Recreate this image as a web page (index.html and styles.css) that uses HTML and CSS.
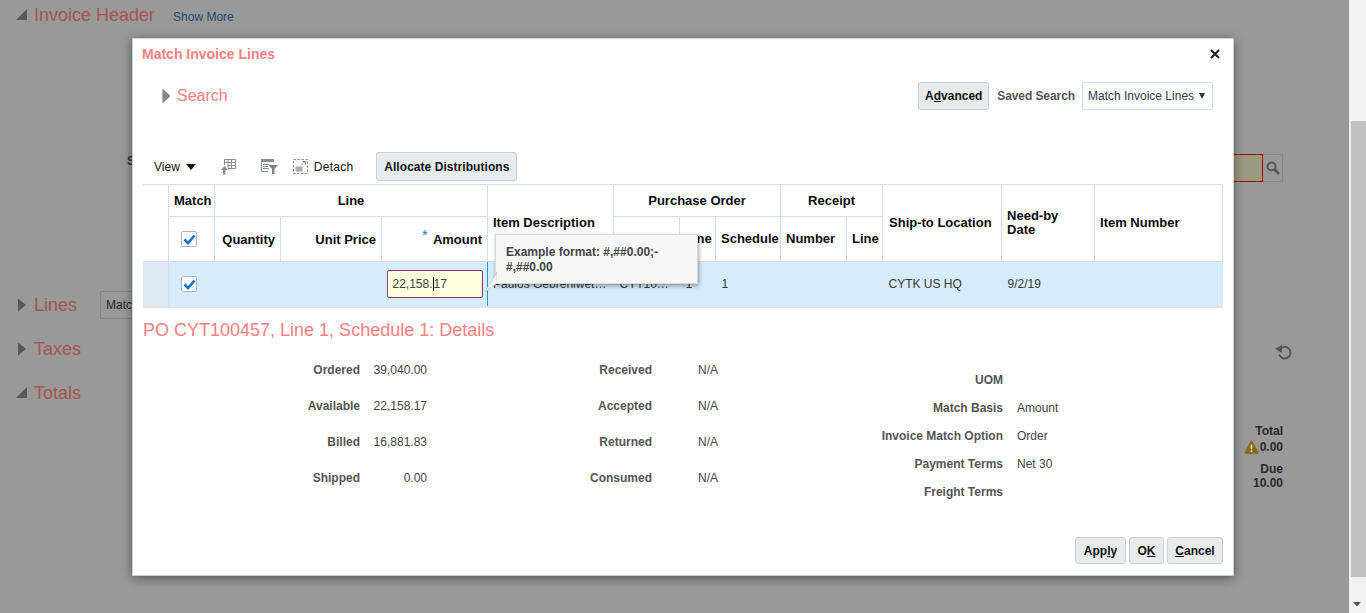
FILE: index.html
```html
<!DOCTYPE html>
<html>
<head>
  <title>Match Invoice Lines</title>
  <link rel="stylesheet" href="styles.css">
</head>
<body>
  <div class="page">

    <div class="page-main">
      <div class="section-row section-first">
        <svg class="tri" width="14" height="14" viewBox="0 0 14 14"><path d="M1 12 L12 1 L12 12 Z"/></svg>
        <span class="section-title">Invoice Header</span>
        <a class="show-more">Show More</a>
      </div>

      <div class="back-search">
        <span class="back-label">Supplier</span>
        <div class="back-field"></div>
        <div class="back-button">
          <svg width="16" height="16" viewBox="0 0 16 16"><circle cx="6.5" cy="6.5" r="4" fill="none" stroke="#555" stroke-width="2"/><path d="M9.5 9.5 L14 14" stroke="#555" stroke-width="2.6"/></svg>
        </div>
      </div>

      <div class="section-row section-lines">
        <svg class="tri" width="14" height="14" viewBox="0 0 14 14"><path d="M3 0.5 L11 7 L3 13.5 Z"/></svg>
        <span class="section-title">Lines</span>
        <div class="back-select">Match Invoice Lines</div>
      </div>

      <div class="section-row section-next">
        <svg class="tri" width="14" height="14" viewBox="0 0 14 14"><path d="M3 0.5 L11 7 L3 13.5 Z"/></svg>
        <span class="section-title">Taxes</span>
        <svg class="undo-icon" width="17" height="15" viewBox="0 0 17 15"><path d="M6 3.2 A5.8 5.8 0 1 1 4.2 9.5" fill="none" stroke="#555" stroke-width="1.9"/><path d="M0 3.8 L7 0 L7 8 Z" fill="#555"/></svg>
      </div>

      <div class="section-row section-next">
        <svg class="tri" width="14" height="14" viewBox="0 0 14 14"><path d="M1 12 L12 1 L12 12 Z"/></svg>
        <span class="section-title">Totals</span>
      </div>

      <div class="back-totals">
        <div class="total-label">Total</div>
        <div class="total-value">
          <svg class="warn-icon" width="15" height="14" viewBox="0 0 15 14"><path d="M7.5 1 L14 13 L1 13 Z" fill="#8a6a0c" stroke="#8a6a0c" stroke-width="1.4" stroke-linejoin="round"/><path d="M6.7 4.5 H8.3 V9.3 H6.7 Z M6.7 10.3 H8.3 V12 H6.7 Z" fill="#ddd"/></svg>
          <span>0.00</span>
        </div>
        <div class="total-label total-due">Due</div>
        <div class="total-label">10.00</div>
      </div>
    </div>

    <div class="scrollbar">
      <div class="scroll-thumb"></div>
      <svg class="scroll-arrow" width="9" height="5" viewBox="0 0 9 5"><path d="M0 0 H8 L4 4.5 Z"/></svg>
    </div>

  </div>

  <div class="dialog">

    <div class="dialog-title-row">
      <span class="dialog-title">Match Invoice Lines</span>
      <svg class="close-icon" width="10" height="10" viewBox="0 0 10 10"><path d="M1 1 L9 9 M9 1 L1 9" stroke="#222" stroke-width="2.2"/></svg>
    </div>

    <div class="search-row">
      <svg width="9" height="16" viewBox="0 0 9 16"><path d="M0.5 0.5 L8.5 8 L0.5 15.5 Z" fill="#7f878d"/></svg>
      <span class="search-title">Search</span>
      <button class="btn btn-advanced">A<u>d</u>vanced</button>
      <span class="saved-label">Saved Search</span>
      <div class="saved-select">
        <span>Match Invoice Lines</span>
        <svg width="6" height="6" viewBox="0 0 6 6"><path d="M0 0 H6 L3 6 Z" fill="#333"/></svg>
      </div>
    </div>

    <div class="toolbar">
      <span class="view-menu">View</span>
      <svg class="view-arrow" width="10" height="6" viewBox="0 0 10 6"><path d="M0 0 H10 L5 6 Z" fill="#111"/></svg>
      <svg class="tool-freeze" width="16" height="16" viewBox="0 0 16 16">
        <path d="M4.5 .5 H15.5 V9.5 H8 M4.5 .5 V6 M8 .5 V9 M11.5 .5 V9 M4.5 3.5 H15.5 M8 6.5 H15.5" fill="none" stroke="#868d94"/>
        <path d="M0.5 15.5 H3 V11 H1 L4.5 7 L8 11 H5.5 V15.5 Z" fill="#868d94"/>
      </svg>
      <svg class="tool-filter" width="17" height="15" viewBox="0 0 17 15">
        <path d="M0 0 H13 V3 H0 Z" fill="#868d94"/>
        <path d="M0.5 3 V12.5 H7 M2 5.5 H8 M2 7.5 H7 M2 9.5 H8" fill="none" stroke="#868d94"/>
        <path d="M7.5 6 H17 L13.5 10 V15 H11 V10 Z" fill="#7b838a"/>
      </svg>
      <svg class="tool-detach" width="15" height="15" viewBox="0 0 15 15">
        <rect x=".5" y=".5" width="14" height="14" fill="none" stroke="#868d94" stroke-dasharray="2.5 1.5"/>
        <path d="M8 6.5 L12 2.5 M9.5 2.5 H12.5 V5.5" fill="none" stroke="#868d94"/>
        <path d="M3 8 H9 V12 H3 Z M5 8 V12 M7 8 V12 M3 10 H9" fill="none" stroke="#7b838a" stroke-width=".8"/>
      </svg>
      <span class="detach-label">Detach</span>
      <button class="btn btn-allocate">Allocate Distributions</button>
    </div>

    <table class="lines-table">
      <colgroup>
        <col class="c26"><col class="c46"><col class="c66"><col class="c101"><col class="c106"><col class="c126"><col class="c66">
        <col class="c36"><col class="c65"><col class="c66"><col class="c36"><col class="c119"><col class="c93"><col class="c128">
      </colgroup>
      <tr class="head-top">
        <th rowspan="2" class="head-gutter"></th>
        <th>Match</th>
        <th colspan="3">Line</th>
        <th rowspan="2" class="left">Item Description</th>
        <th colspan="3">Purchase Order</th>
        <th colspan="2">Receipt</th>
        <th rowspan="2" class="left head-ship">Ship-to Location</th>
        <th rowspan="2" class="left">Need-by<br>Date</th>
        <th rowspan="2" class="left">Item Number</th>
      </tr>
      <tr class="head-sub">
        <th class="left check-cell"><span class="check"><svg width="13" height="11" viewBox="0 0 13 11"><path d="M1.5 5.5 L5 9 L11.5 1.5" fill="none" stroke="#1272cc" stroke-width="2.6"/></svg></span></th>
        <th class="right">Quantity</th>
        <th class="right">Unit Price</th>
        <th class="right"><span class="req">*</span> Amount</th>
        <th class="left">Number</th>
        <th class="left">Line</th>
        <th class="left">Schedule</th>
        <th class="left">Number</th>
        <th class="left">Line</th>
      </tr>
      <tr class="data-row">
        <td class="gutter"></td>
        <td class="check-cell"><span class="check"><svg width="13" height="11" viewBox="0 0 13 11"><path d="M1.5 5.5 L5 9 L11.5 1.5" fill="none" stroke="#1272cc" stroke-width="2.6"/></svg></span></td>
        <td></td>
        <td></td>
        <td class="amount-cell"><div class="amount-input">22,158.<i class="caret"></i>17</div></td>
        <td class="clip item-cell">Paulos Gebrehiwet Tesfay</td>
        <td class="clip">CYT100457</td>
        <td>1</td>
        <td>1</td>
        <td></td>
        <td></td>
        <td>CYTK US HQ</td>
        <td>9/2/19</td>
        <td></td>
      </tr>
    </table>

    <div class="tooltip">
      <svg class="tooltip-tail" width="13" height="21" viewBox="0 0 13 21"><path d="M13 0 L1 20 L13 11 Z" fill="#f7f7f7" stroke="#d0d0d0"/></svg>
      Example format: #,##0.00;-<br>#,##0.00
    </div>

    <div class="details-title">PO CYT100457, Line 1, Schedule 1: Details</div>

    <div class="details">
      <div class="detail-col col-qty">
        <span class="lbl">Ordered</span><span class="val-right">39,040.00</span>
        <span class="lbl">Available</span><span class="val-right">22,158.17</span>
        <span class="lbl">Billed</span><span class="val-right">16,881.83</span>
        <span class="lbl">Shipped</span><span class="val-right">0.00</span>
      </div>
      <div class="detail-col col-recv">
        <span class="lbl">Received</span><span class="val">N/A</span>
        <span class="lbl">Accepted</span><span class="val">N/A</span>
        <span class="lbl">Returned</span><span class="val">N/A</span>
        <span class="lbl">Consumed</span><span class="val">N/A</span>
      </div>
      <div class="detail-col col-terms">
        <span class="lbl">UOM</span><span class="val"></span>
        <span class="lbl">Match Basis</span><span class="val">Amount</span>
        <span class="lbl">Invoice Match Option</span><span class="val">Order</span>
        <span class="lbl">Payment Terms</span><span class="val">Net 30</span>
        <span class="lbl">Freight Terms</span><span class="val"></span>
      </div>
    </div>

    <div class="dialog-footer">
      <button class="btn btn-apply">App<u>l</u>y</button>
      <button class="btn btn-ok">O<u>K</u></button>
      <button class="btn btn-cancel"><u>C</u>ancel</button>
    </div>

  </div>
</body>
</html>
```
FILE: styles.css
```css
html, body
{
  margin: 0;
  height: 613px;
  overflow: hidden;
  font-family: "Liberation Sans", Arial, sans-serif;
  font-size: 12px;
}

.page
{
  display: flex;
  height: 613px;
  background-color: #999999;
}

.page-main
{
  flex: 1;
  display: flex;
  flex-direction: column;
}

.section-row
{
  display: flex;
  align-items: center;
  height: 28px;
  padding-left: 15px;
  padding-right: 57px;
}

.section-first
{
  margin-top: 1px;
}

.section-lines
{
  margin-top: 109px;
}

.section-next
{
  margin-top: 16px;
}

.tri
{
  fill: #55595c;
  margin-right: 5px;
}

.section-title
{
  font-size: 18px;
  color: #a85550;
}

.show-more
{
  margin: 4px 0 0 18px;
  color: #1d4a73;
}

.back-search
{
  display: flex;
  height: 28px;
  margin-top: 125px;
  margin-left: 127px;
  padding-right: 66px;
}

.back-label
{
  font-weight: bold;
  color: #333333;
}

.back-field
{
  flex: 1;
  height: 26px;
  margin-left: 10px;
  background-color: #9a9a80;
  border: 1px solid #a00000;
}

.back-button
{
  display: flex;
  align-items: center;
  justify-content: center;
  width: 19px;
  height: 26px;
  border: 1px solid #8a8a8a;
  border-left: none;
}

.back-select
{
  margin-left: 23px;
  padding: 0 5px;
  width: 180px;
  height: 26px;
  line-height: 26px;
  color: #222222;
  border: 1px solid #858585;
  border-radius: 2px;
}

.undo-icon
{
  margin: 7px 0 0 auto;
}

.back-totals
{
  margin-top: 17px;
  padding-right: 66px;
  color: #2a2a2a;
  font-weight: bold;
  text-align: right;
}

.total-label
{
  line-height: 14px;
}

.total-value
{
  display: flex;
  justify-content: flex-end;
  align-items: center;
  height: 18px;
}

.warn-icon
{
  margin-right: 1px;
}

.total-due
{
  margin-top: 6px;
}

.scrollbar
{
  width: 17px;
  background-color: #f1f1f1;
}

.scroll-thumb
{
  margin-top: 121px;
  margin-left: 2px;
  height: 456px;
  background-color: #c1c1c1;
}

.scroll-arrow
{
  display: block;
  margin: 25px 0 0 4px;
  fill: #555555;
}

/* dialog */

.dialog
{
  position: absolute;
  left: 132px;
  top: 38px;
  width: 1100px;
  height: 536px;
  display: flex;
  flex-direction: column;
  background-color: #ffffff;
  border: 1px solid #c5d0da;
  box-shadow: 0 2px 10px rgba(0,0,0,0.45);
}

.dialog-title-row
{
  display: flex;
  justify-content: space-between;
  align-items: center;
  height: 30px;
  padding: 0 13px 0 9px;
}

.dialog-title
{
  font-size: 14px;
  font-weight: bold;
  color: #ff8080;
}

.search-row
{
  display: flex;
  align-items: center;
  height: 28px;
  margin-top: 13px;
  padding: 0 20px 0 29px;
}

.search-title
{
  margin-left: 6px;
  font-size: 16px;
  color: #ff8080;
}

.btn
{
  font-family: "Liberation Sans", Arial, sans-serif;
  font-size: 12px;
  font-weight: bold;
  color: #111111;
  background-color: #e7ebee;
  border: 1px solid #c5d0da;
  border-radius: 3px;
  padding: 0;
  cursor: pointer;
}

.btn-advanced
{
  margin-left: auto;
  width: 71px;
  height: 28px;
}

.saved-label
{
  margin-left: 8px;
  font-weight: bold;
  letter-spacing: -0.08px;
  color: #555555;
}

.saved-select
{
  display: flex;
  justify-content: space-between;
  align-items: center;
  box-sizing: border-box;
  width: 131px;
  height: 28px;
  margin-left: 7px;
  padding: 0 7px 0 5px;
  color: #3b3b4f;
  background-color: #fafcfd;
  border: 1px solid #dbe3ea;
  border-radius: 2px;
}

.toolbar
{
  display: flex;
  align-items: center;
  height: 29px;
  margin-top: 42px;
  padding-left: 21px;
  color: #111111;
}

.view-arrow
{
  margin-left: 6px;
}

.tool-freeze
{
  margin-left: 24px;
}

.tool-filter
{
  margin-left: 25px;
}

.tool-detach
{
  margin-left: 15px;
}

.detach-label
{
  margin-left: 6px;
  letter-spacing: 0.25px;
}

.btn-allocate
{
  width: 141px;
  height: 29px;
  margin-left: 23px;
  letter-spacing: 0.05px;
}

/* table */

.lines-table
{
  width: 1080px;
  margin: 3px 0 0 9.5px;
  table-layout: fixed;
  border-collapse: collapse;
}

.c26 { width: 26px; }
.c36 { width: 36px; }
.c46 { width: 46px; }
.c65 { width: 65px; }
.c66 { width: 66px; }
.c93 { width: 93px; }
.c101 { width: 101px; }
.c106 { width: 106px; }
.c119 { width: 119px; }
.c126 { width: 126px; }
.c128 { width: 128px; }

.lines-table th
{
  padding: 0 5px;
  border: 1px solid #d6dfe7;
  font-size: 13px;
  font-weight: bold;
  color: #0a0a0a;
  white-space: nowrap;
}

.lines-table th.head-gutter
{
  border-left: none;
}

.lines-table th.left
{
  text-align: left;
  line-height: 14px;
}

.lines-table th.head-ship
{
  padding-left: 6px;
}

.lines-table th.right
{
  text-align: right;
}

.lines-table th.check-cell, .data-row td.check-cell
{
  padding-left: 12px;
}

.head-top th
{
  height: 31px;
}

.head-sub th
{
  height: 44px;
}

.req
{
  position: relative;
  top: -4px;
  margin-right: 2px;
  font-weight: normal;
  font-size: 15px;
  line-height: 10px;
  color: #1f7fb8;
}

.data-row td
{
  height: 44px;
  padding: 0 6px;
  color: #3a3a3a;
  background-color: #d6ebfc;
  border-top: 1px solid #d6dfe7;
  border-bottom: 2px solid #e2e4e6;
  white-space: nowrap;
}

.data-row td.gutter
{
  background-color: #dfe9f3;
  border-right: 1px solid #d6dfe7;
}

.data-row td.clip
{
  overflow: hidden;
  text-overflow: ellipsis;
}

.data-row td.item-cell
{
  padding-left: 5px;
}

.data-row td.amount-cell
{
  padding: 0 4px 0 5px;
  border-right: 1px solid #1a9bc7;
}

.check
{
  display: inline-flex;
  align-items: center;
  justify-content: center;
  box-sizing: border-box;
  width: 16px;
  height: 16px;
  vertical-align: middle;
  background-color: #ffffff;
  border: 1px solid #a9b5c0;
  border-radius: 2px;
}

.amount-input
{
  box-sizing: border-box;
  height: 28px;
  line-height: 26px;
  padding-left: 5px;
  color: #444444;
  background-color: #ffffe0;
  border: 1px solid #8c3c6e;
  border-radius: 2px;
}

.caret
{
  display: inline-block;
  width: 1px;
  height: 14px;
  vertical-align: -3px;
  background-color: #000000;
}

.tooltip
{
  position: absolute;
  left: 362px;
  top: 195px;
  box-sizing: border-box;
  width: 203px;
  height: 50px;
  padding: 10px 10px;
  line-height: 15px;
  font-weight: bold;
  color: #444444;
  background-color: #f7f7f7;
  border: 1px solid #d8d8d8;
  box-shadow: 1px 2px 4px rgba(0,0,0,0.35);
}

.tooltip-tail
{
  position: absolute;
  left: -12px;
  top: 37px;
}

.details-title
{
  margin: 12px 0 0 10px;
  height: 21px;
  line-height: 21px;
  font-size: 18px;
  color: #ff8080;
}

.details
{
  display: flex;
  margin: 11px 0 0 10px;
}

.detail-col
{
  display: grid;
  align-items: center;
}

.col-qty
{
  grid-template-columns: 217px 67px;
  grid-auto-rows: 36px;
}

.col-recv
{
  grid-template-columns: 225px 100px;
  grid-auto-rows: 36px;
  column-gap: 46px;
}

.col-terms
{
  grid-template-columns: 206px 100px;
  grid-auto-rows: 28px;
  column-gap: 14px;
  margin-left: -1px;
  margin-top: 14px;
}

.lbl
{
  text-align: right;
  font-weight: bold;
  color: #555555;
}

.val
{
  color: #444444;
}

.val-right
{
  text-align: right;
  color: #444444;
}

.dialog-footer
{
  display: flex;
  justify-content: flex-end;
  gap: 3px;
  margin-top: auto;
  padding: 0 10px 11px 0;
}

.dialog-footer .btn
{
  height: 27px;
}

.btn-apply
{
  width: 51px;
}

.btn-ok
{
  width: 35px;
}

.btn-cancel
{
  width: 56px;
}
```
